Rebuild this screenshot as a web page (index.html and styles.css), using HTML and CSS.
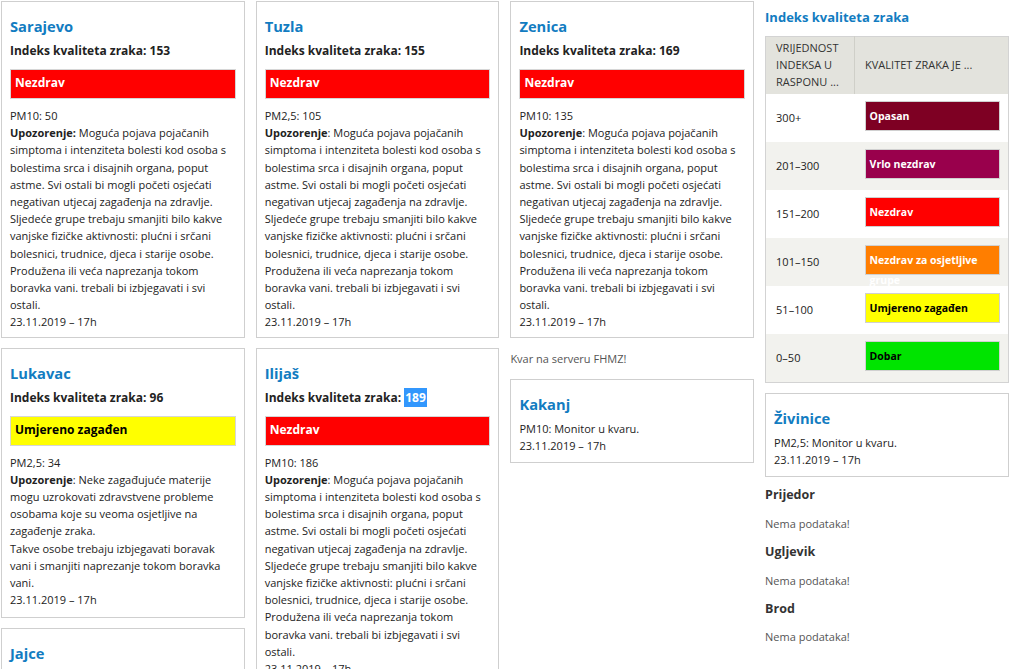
FILE: index.html
```html
<!DOCTYPE html>
<html lang="bs">
<head>
<meta charset="utf-8">
<title>Indeks kvaliteta zraka</title>
<link rel="stylesheet" href="styles.css">
</head>
<body>
<div class="page">
  <div class="col">
    <div class="card">
      <h2 class="city">Sarajevo</h2>
      <p class="aqi">Indeks kvaliteta zraka: 153</p>
      <div class="status s-red">Nezdrav</div>
      <p>PM10: 50</p>
      <p><b>Upozorenje:</b> Moguća pojava pojačanih simptoma i intenziteta bolesti kod osoba s bolestima srca i disajnih organa, poput astme. Svi ostali bi mogli početi osjećati negativan utjecaj zagađenja na zdravlje. Sljedeće grupe trebaju smanjiti bilo kakve vanjske fizičke aktivnosti: plućni i srčani bolesnici, trudnice, djeca i starije osobe. Produžena ili veća naprezanja tokom boravka vani. trebali bi izbjegavati i svi ostali.</p>
      <p>23.11.2019 – 17h</p>
    </div>
    <div class="card card-mid">
      <h2 class="city">Lukavac</h2>
      <p class="aqi">Indeks kvaliteta zraka: 96</p>
      <div class="status s-yellow">Umjereno zagađen</div>
      <p>PM2,5: 34</p>
      <p><b>Upozorenje</b>: Neke zagađujuće materije mogu uzrokovati zdravstvene probleme osobama koje su veoma osjetljive na zagađenje zraka.<br>Takve osobe trebaju izbjegavati boravak vani i smanjiti naprezanje tokom boravka vani.</p>
      <p>23.11.2019 – 17h</p>
    </div>
    <div class="card">
      <h2 class="city">Jajce</h2>
      <p class="aqi">Indeks kvaliteta zraka: 58</p>
      <div class="status s-yellow">Umjereno zagađen</div>
      <p>PM10: 58</p>
      <p>23.11.2019 – 17h</p>
    </div>
  </div>

  <div class="col">
    <div class="card">
      <h2 class="city">Tuzla</h2>
      <p class="aqi">Indeks kvaliteta zraka: 155</p>
      <div class="status s-red">Nezdrav</div>
      <p>PM2,5: 105</p>
      <p><b>Upozorenje</b>: Moguća pojava pojačanih simptoma i intenziteta bolesti kod osoba s bolestima srca i disajnih organa, poput astme. Svi ostali bi mogli početi osjećati negativan utjecaj zagađenja na zdravlje. Sljedeće grupe trebaju smanjiti bilo kakve vanjske fizičke aktivnosti: plućni i srčani bolesnici, trudnice, djeca i starije osobe. Produžena ili veća naprezanja tokom boravka vani. trebali bi izbjegavati i svi ostali.</p>
      <p>23.11.2019 – 17h</p>
    </div>
    <div class="card">
      <h2 class="city">Ilijaš</h2>
      <p class="aqi">Indeks kvaliteta zraka: <span class="sel">189</span></p>
      <div class="status s-red">Nezdrav</div>
      <p>PM10: 186</p>
      <p><b>Upozorenje</b>: Moguća pojava pojačanih simptoma i intenziteta bolesti kod osoba s bolestima srca i disajnih organa, poput astme. Svi ostali bi mogli početi osjećati negativan utjecaj zagađenja na zdravlje. Sljedeće grupe trebaju smanjiti bilo kakve vanjske fizičke aktivnosti: plućni i srčani bolesnici, trudnice, djeca i starije osobe. Produžena ili veća naprezanja tokom boravka vani. trebali bi izbjegavati i svi ostali.</p>
      <p>23.11.2019 – 17h</p>
    </div>
  </div>

  <div class="col">
    <div class="card">
      <h2 class="city">Zenica</h2>
      <p class="aqi">Indeks kvaliteta zraka: 169</p>
      <div class="status s-red">Nezdrav</div>
      <p>PM10: 135</p>
      <p><b>Upozorenje</b>: Moguća pojava pojačanih simptoma i intenziteta bolesti kod osoba s bolestima srca i disajnih organa, poput astme. Svi ostali bi mogli početi osjećati negativan utjecaj zagađenja na zdravlje. Sljedeće grupe trebaju smanjiti bilo kakve vanjske fizičke aktivnosti: plućni i srčani bolesnici, trudnice, djeca i starije osobe. Produžena ili veća naprezanja tokom boravka vani. trebali bi izbjegavati i svi ostali.</p>
      <p>23.11.2019 – 17h</p>
    </div>
    <p class="notice">Kvar na serveru FHMZ!</p>
    <div class="card card-small">
      <h2 class="city">Kakanj</h2>
      <p>PM10: Monitor u kvaru.</p>
      <p>23.11.2019 – 17h</p>
    </div>
  </div>

  <aside class="col side">
    <h2 class="side-title">Indeks kvaliteta zraka</h2>
    <table class="scale">
      <thead>
        <tr>
          <th class="c-range">Vrijednost indeksa u rasponu ...</th>
          <th class="c-q">Kvalitet zraka je ...</th>
        </tr>
      </thead>
      <tbody>
        <tr><td class="range">300+</td><td class="q"><div class="lvl l-hazard">Opasan</div></td></tr>
        <tr class="alt"><td class="range">201–300</td><td class="q"><div class="lvl l-vunhealthy">Vrlo nezdrav</div></td></tr>
        <tr><td class="range">151–200</td><td class="q"><div class="lvl l-unhealthy">Nezdrav</div></td></tr>
        <tr class="alt"><td class="range">101–150</td><td class="q"><div class="lvl l-sensitive">Nezdrav za osjetljive grupe</div></td></tr>
        <tr><td class="range">51–100</td><td class="q"><div class="lvl l-moderate">Umjereno zagađen</div></td></tr>
        <tr class="alt"><td class="range">0–50</td><td class="q"><div class="lvl l-good">Dobar</div></td></tr>
      </tbody>
    </table>
    <div class="card card-small">
      <h2 class="city">Živinice</h2>
      <p>PM2,5: Monitor u kvaru.</p>
      <p>23.11.2019 – 17h</p>
    </div>
    <div class="nodata">
      <h3 class="nd-title">Prijedor</h3>
      <p class="nd">Nema podataka!</p>
      <h3 class="nd-title">Ugljevik</h3>
      <p class="nd">Nema podataka!</p>
      <h3 class="nd-title">Brod</h3>
      <p class="nd">Nema podataka!</p>
    </div>
  </aside>
</div>
</body>
</html>
```

FILE: styles.css
```css
* {
  box-sizing: border-box;
}

body {
  margin: 0;
  background: #ffffff;
  color: #222222;
  font-family: "Open Sans", "Noto Sans", sans-serif;
  font-size: 11px;
  line-height: 17.2px;
}

p {
  margin: 0;
}

.page {
  display: grid;
  grid-template-columns: repeat(4, 243.5px);
  column-gap: 11.2px;
  align-items: start;
  padding: 1px 0 0 1px;
}

.col {
  display: flex;
  flex-direction: column;
  gap: 10px;
}

.card {
  border: 1px solid #cfcfcf;
  padding: 0 8px 6px;
}

.card-mid {
  padding-bottom: 8.5px;
}

.card-small {
  padding-bottom: 8px;
}

.city {
  margin: 14px 0 6px;
  color: #127cc1;
  font-size: 14.7px;
  font-weight: 700;
  line-height: 20px;
}

.aqi {
  font-size: 12px;
  font-weight: 700;
  line-height: 18px;
}

.sel {
  padding: 1px 1px;
  background: #3297fd;
  color: #ffffff;
}

.status {
  height: 30px;
  margin: 9px 0 8px;
  padding: 3px 4px;
  border: 1px solid #d6d6d6;
  color: #ffffff;
  font-size: 12px;
  font-weight: 700;
  line-height: 20px;
}

.s-red {
  background: #ff0000;
}

.s-yellow {
  background: #ffff00;
  color: #000000;
}

.notice {
  padding: 2px 0;
  color: #555555;
}

/* sidebar */
.side-title {
  margin: 7px 0 0;
  color: #127cc1;
  font-size: 13px;
  font-weight: 700;
  line-height: 18px;
}

.scale {
  width: 100%;
  border-collapse: collapse;
  border: 1px solid #d3d3d3;
}

.scale th {
  padding: 2px 10px 4px;
  background: #e3e3dd;
  color: #333333;
  font-weight: 400;
  line-height: 17px;
  text-align: left;
  text-transform: uppercase;
  vertical-align: middle;
}

.scale th.c-range {
  width: 89px;
  border-right: 1px solid #cfcfc8;
}

.scale td {
  vertical-align: middle;
  background: #ffffff;
}

.scale tr.alt td {
  background: #f2f2ee;
}

.scale td.range {
  padding: 0 10px;
  color: #222222;
}

.scale td.q {
  padding: 7px 8px 11px 10px;
}

.lvl {
  height: 30px;
  padding: 4px 4px;
  border: 1px solid #d0d0d0;
  color: #ffffff;
  font-size: 10.5px;
  font-weight: 700;
  line-height: 20px;
}

.l-hazard {
  background: #7e0023;
}

.l-vunhealthy {
  background: #99004c;
}

.l-unhealthy {
  background: #ff0000;
}

.l-sensitive {
  background: #ff7e00;
}

.l-moderate {
  background: #ffff00;
  color: #000000;
}

.l-good {
  background: #00e400;
  color: #000000;
}

.nodata {
  margin-top: -1px;
}

.nd-title {
  margin: 0 0 11.5px;
  color: #333333;
  font-size: 12.5px;
  font-weight: 700;
  line-height: 17px;
}

.nd {
  margin: 0 0 11px;
  color: #555555;
}
```
